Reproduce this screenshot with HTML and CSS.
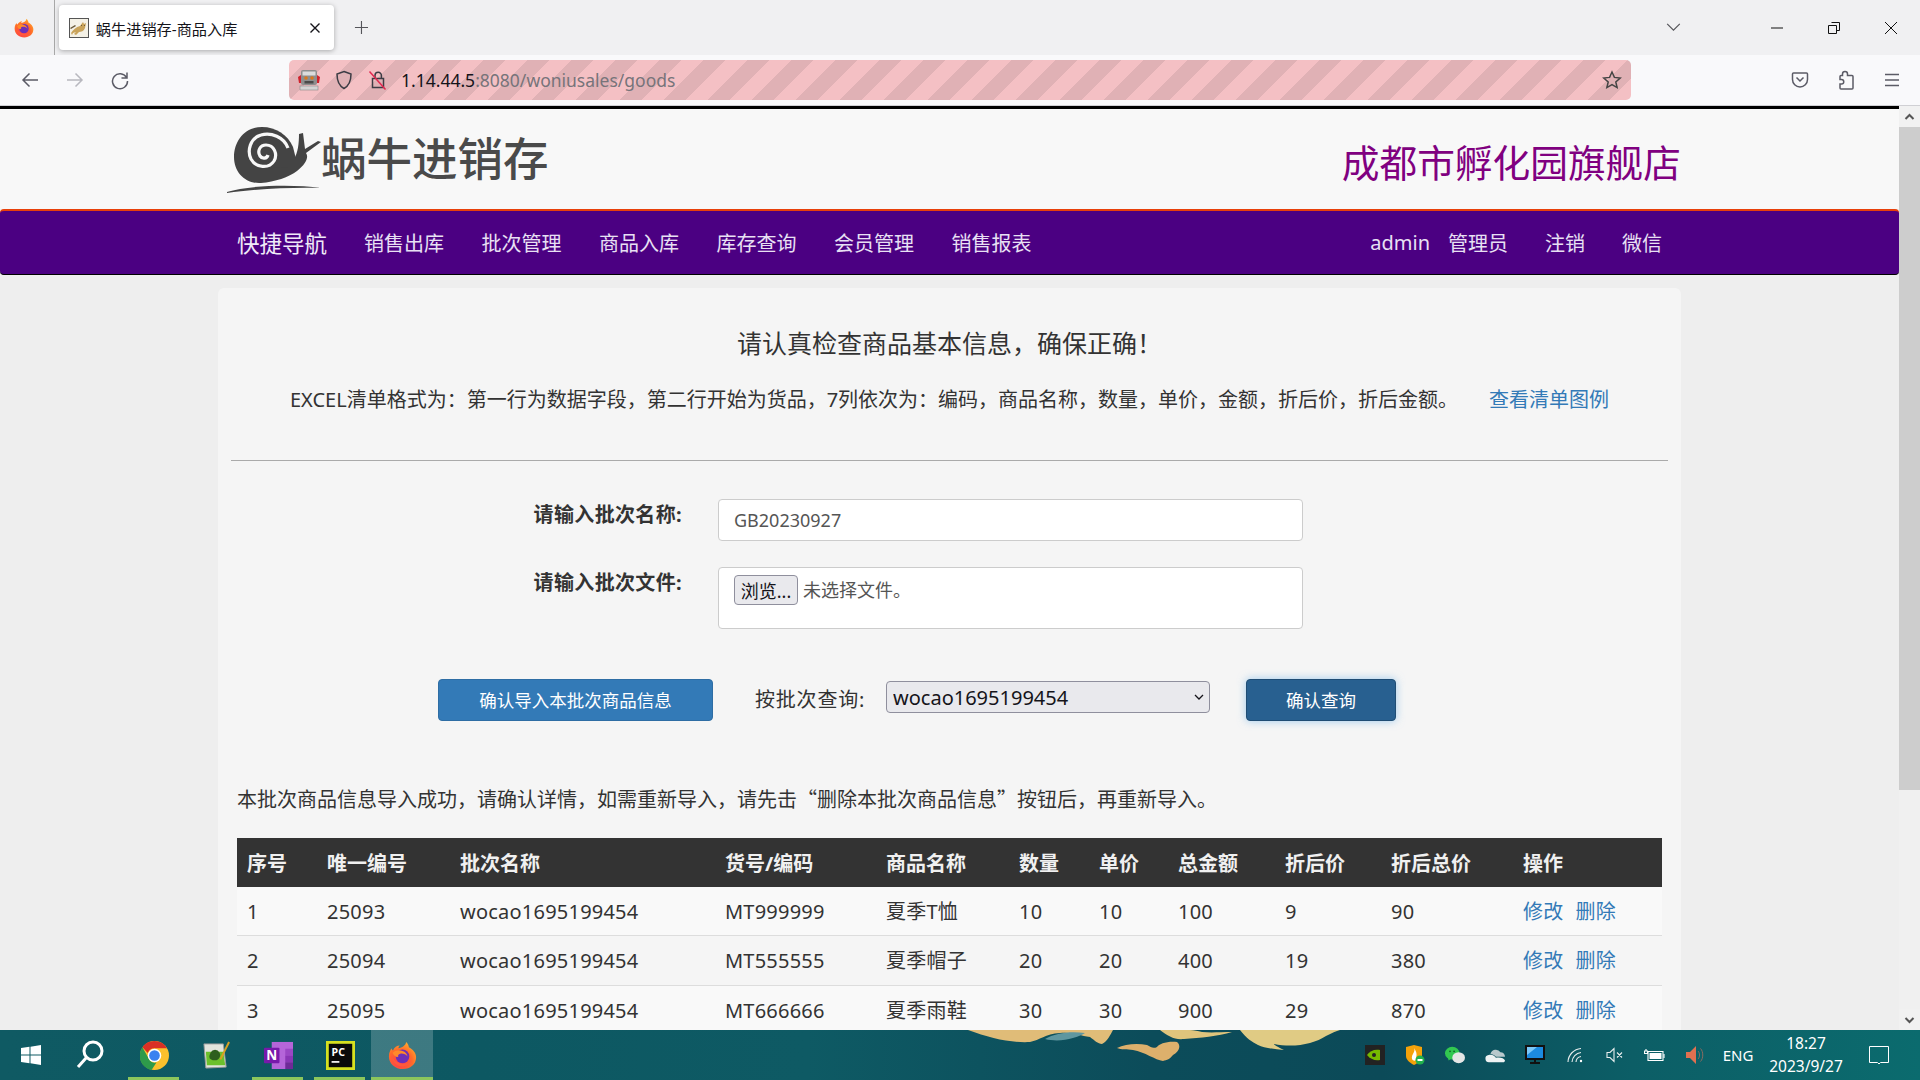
FILE: index.html
```html
<!DOCTYPE html>
<html lang="zh-CN">
<head>
<meta charset="utf-8">
<title>蜗牛进销存-商品入库</title>
<link rel="stylesheet" href="styles.css">
</head>
<body>
<svg class="defs" width="0" height="0" aria-hidden="true">
  <defs>
    <radialGradient id="foxg" cx="0.4" cy="0.75" r="0.85"><stop offset="0" stop-color="#ff3750"/><stop offset="0.55" stop-color="#ff6a2a"/><stop offset="1" stop-color="#ffbd2e"/></radialGradient>
    <symbol id="firefox" viewBox="0 0 32 32">
      <path fill="url(#foxg)" d="M20 1c2 2 3 4 3 6 4 2 8 6 8 11 0 8-6.500 13-14.500 13C8 31 1 25 1 17c0-4 1.500-7 3-9 0 1 .5 2 1.500 2.500C7 7 10 5 13 5c-1 1-1.500 2-1.500 3 4-1 8-3 8.500-7z"/>
      <circle cx="16" cy="17" r="7.500" fill="#6d2fb8"/>
      <path fill="#ff8a2a" d="M5 13c3-3 8-3.500 11-2 3 1 5 3 5.500 6-2-2.500-5-3.500-8-3-2 .5-3 2-2 3.500-3 .5-5-1-6.500-4.500z"/>
      <path fill="#ff5a3c" d="M4 17c1 7 6 11 12 11 5 0 9-3 10-7-2 3-6 4.500-10 4-5-.5-9-3.500-12-8z"/>
    </symbol>
  </defs>
</svg>
<div class="screen">
  <header class="tabbar">
    <div class="tab-home"><svg class="ic20" viewBox="0 0 32 32"><use href="#firefox"/></svg></div>
    <div class="tab">
      <svg class="favicon" viewBox="0 0 20 20"><rect x="0.500" y="0.500" width="19" height="19" fill="#f4f1e6" stroke="#555"/><path fill="#c9a35a" d="M2 15c2-3 5-6 9-7l3-4 1 2 2-1-1 5c-1 3-4 4-6 4l-3 3-2-1 2-2-3 1-1 2z"/><path fill="#6b5a3a" d="M1 10l5-3 1 1-5 3zM12 7h1v1h-1zM15 7h1v1h-1z"/></svg>
      <span class="tab-title">蜗牛进销存-商品入库</span>
      <svg class="tab-close" viewBox="0 0 12 12"><path d="M1.500 1.500l9 9M10.500 1.500l-9 9"/></svg>
    </div>
    <svg class="new-tab" viewBox="0 0 16 16"><path d="M8 1v14M1 8h14"/></svg>
    <svg class="tab-list" viewBox="0 0 16 10"><path d="M1 1l7 7 7-7"/></svg>
    <div class="win-btns">
      <svg class="win" viewBox="0 0 14 14"><path d="M1 7h12"/></svg>
      <svg class="win" viewBox="0 0 14 14"><path d="M4.500 1.500h8v8h-2.500M1.500 4.500h8v8h-8z"/></svg>
      <svg class="win" viewBox="0 0 14 14"><path d="M1 1l12 12M13 1L1 13"/></svg>
    </div>
  </header>

  <nav class="toolbar">
    <svg class="tool" viewBox="0 0 20 20"><path d="M18 10H3M9.500 3.500L3 10l6.500 6.500"/></svg>
    <svg class="tool off" viewBox="0 0 20 20"><path d="M2 10h15M10.500 3.500L17 10l-6.500 6.500"/></svg>
    <svg class="tool" viewBox="0 0 20 20"><path d="M16.500 7.500A7.500 7.500 0 1 0 17.500 11M17 2.500v5.500h-5.500"/></svg>
    <div class="urlbar">
      <svg class="url-robot" viewBox="0 0 22 22"><path fill="#d0222c" d="M0 8l3-2v8H1zM22 8l-3-2v8h2z"/><rect x="3" y="1" width="16" height="15" rx="2" fill="#8e8e8e"/><rect x="4.500" y="2.500" width="13" height="4" fill="#dcdcdc"/><circle cx="8" cy="9" r="1.800" fill="#d9781e"/><circle cx="14" cy="9" r="1.800" fill="#d9781e"/><rect x="6.500" y="12" width="9" height="2.500" fill="#4a4a4a"/><rect x="2" y="17" width="18" height="4" fill="#d4d4d4" stroke="#888" stroke-width=".6"/></svg>
      <svg class="url-ic" viewBox="0 0 20 20"><path d="M10 1.500l7 2.500c0 7-1.500 11.500-7 14.500C4.500 15.500 3 11 3 4z"/></svg>
      <svg class="url-ic" viewBox="0 0 20 20"><path d="M7 8V5.500a3.200 3.200 0 0 1 6.400 0V8M4.500 8.500h11v9h-11z"/><path class="slash" d="M1.500 1.500l16 18"/></svg>
      <span class="url-text"><b>1.14.44.5</b>:8080/woniusales/goods</span>
      <svg class="url-star" viewBox="0 0 20 20"><path d="M10 2l2.400 5.400 5.800.6-4.400 3.900 1.300 5.700L10 14.700l-5.100 2.900 1.300-5.700L1.800 8l5.800-.6z"/></svg>
    </div>
    <div class="tool-right">
      <svg class="tool" viewBox="0 0 20 20"><path d="M3.500 3h13a1 1 0 0 1 1 1v5.500a7.500 7.500 0 0 1-15 0V4a1 1 0 0 1 1-1zM6.500 7.500L10 11l3.500-3.500"/></svg>
      <svg class="tool" viewBox="0 0 20 20"><path d="M9 1.500c1.500 0 2.500 1 2.500 2.500v1.500H16a1 1 0 0 1 1 1V18a1 1 0 0 1-1 1H5a1 1 0 0 1-1-1v-4h1.500a2 2 0 0 0 0-4.500H4V6.500a1 1 0 0 1 1-1h1.500V4C6.500 2.500 7.500 1.500 9 1.500z"/></svg>
      <svg class="tool" viewBox="0 0 20 20"><path d="M3 4.500h14M3 10h14M3 15.500h14"/></svg>
    </div>
  </nav>

  <div class="viewport">
    <div class="page">
      <div class="site-head">
        <div class="logo">
          <svg class="snail" viewBox="0 0 105 80">
            <path class="snail-body" d="M43 12C26 12 15 26 15 42c0 16 12 27 27 26 14-1 28-6 36-12 9-7 12-14 9-18l15-11-3-1-13 8-2-16-4 1c0 9-1 19-5 25"/>
            <path class="snail-body" d="M43 12c14 0 26 8 31 20l3 12-8 8-30 2z"/>
            <path class="snail-spiral" d="M69 33C65 22 52 17 42 20 31 23 28 36 32 44c5 9 18 10 23 2 4-7 0-16-8-16-6 0-9 6-6 11 2 3 7 3 8-1"/>
            <path class="snail-body" d="M8 77C30 70 75 69 102 73 75 72 35 74 8 78z"/>
          </svg>
          <span class="logo-text">蜗牛进销存</span>
        </div>
        <div class="shop-name">成都市孵化园旗舰店</div>
      </div>
      <div class="main-nav">
        <a class="nav-brand">快捷导航</a>
        <a class="nav-item">销售出库</a>
        <a class="nav-item">批次管理</a>
        <a class="nav-item">商品入库</a>
        <a class="nav-item">库存查询</a>
        <a class="nav-item">会员管理</a>
        <a class="nav-item">销售报表</a>
        <div class="nav-user">
          <span class="nav-name">admin</span><span class="nav-role">管理员</span>
          <a class="nav-link">注销</a>
          <a class="nav-link">微信</a>
        </div>
      </div>

      <main class="card">
        <h1 class="notice">请认真检查商品基本信息，确保正确！</h1>
        <div class="format-row">
          <span>EXCEL清单格式为：第一行为数据字段，第二行开始为货品，7列依次为：编码，商品名称，数量，单价，金额，折后价，折后金额。</span>
          <a class="link">查看清单图例</a>
        </div>
        <hr class="rule">
        <div class="form-row">
          <label class="form-label">请输入批次名称:</label>
          <input class="form-input" type="text" value="GB20230927">
        </div>
        <div class="form-row file-row">
          <label class="form-label">请输入批次文件:</label>
          <div class="form-file"><button class="file-btn" type="button">浏览...</button><span class="file-none">未选择文件。</span></div>
        </div>
        <div class="actions">
          <button class="btn btn-import" type="button">确认导入本批次商品信息</button>
          <span class="query-label">按批次查询:</span>
          <div class="select-wrap">
            <select class="batch-select"><option>wocao1695199454</option></select>
            <svg class="select-arrow" viewBox="0 0 10 6"><path d="M1 1l4 4 4-4"/></svg>
          </div>
          <button class="btn btn-query" type="button">确认查询</button>
        </div>
        <p class="message">本批次商品信息导入成功，请确认详情，如需重新导入，请先击“删除本批次商品信息”按钮后，再重新导入。</p>
        <table class="goods">
          <colgroup><col class="c1"><col class="c2"><col class="c3"><col class="c4"><col class="c5"><col class="c6"><col class="c7"><col class="c8"><col class="c9"><col class="c10"><col class="c11"></colgroup>
          <thead><tr><th>序号</th><th>唯一编号</th><th>批次名称</th><th>货号/编码</th><th>商品名称</th><th>数量</th><th>单价</th><th>总金额</th><th>折后价</th><th>折后总价</th><th>操作</th></tr></thead>
          <tbody>
            <tr><td>1</td><td>25093</td><td>wocao1695199454</td><td>MT999999</td><td>夏季T恤</td><td>10</td><td>10</td><td>100</td><td>9</td><td>90</td><td><a class="link">修改</a><a class="link op">删除</a></td></tr>
            <tr><td>2</td><td>25094</td><td>wocao1695199454</td><td>MT555555</td><td>夏季帽子</td><td>20</td><td>20</td><td>400</td><td>19</td><td>380</td><td><a class="link">修改</a><a class="link op">删除</a></td></tr>
            <tr><td>3</td><td>25095</td><td>wocao1695199454</td><td>MT666666</td><td>夏季雨鞋</td><td>30</td><td>30</td><td>900</td><td>29</td><td>870</td><td><a class="link">修改</a><a class="link op">删除</a></td></tr>
          </tbody>
        </table>
      </main>
    </div>
    <aside class="scrollbar">
      <div class="sb-btn"><svg class="sb-arrow" viewBox="0 0 10 8"><path d="M1 6l4-4 4 4"/></svg></div>
      <div class="sb-track"><div class="sb-thumb"></div></div>
      <div class="sb-btn"><svg class="sb-arrow" viewBox="0 0 10 8"><path d="M1 2l4 4 4-4"/></svg></div>
    </aside>
  </div>

  <footer class="taskbar">
    <svg class="wallpaper" viewBox="0 0 1920 50" preserveAspectRatio="none">
      <path fill="#e0bc78" d="M968 0c22 8 42 13 62 12 10-2 15-8 30-9 15-1 20 3 30 4 4 3 8 7 12 7 6-3 8-9 11-14z"/>
      <path fill="#5f97a0" d="M1045 9c10-6 25-8 40-6-8 5-25 10-40 6z"/>
      <path fill="#dfc47c" d="M1160 0c8 6 14 10 24 9 16-1 34-3 48-7-12 0-20 1-30 0-4-1-8-2-12-2z"/>
      <path fill="#ddb06c" d="M1117 18c8-4 20-5 30-3 4 2 6 4 10 2 2-3 10-6 20-5 4 3 3 9-4 13-3 4-6 5-10 6-8-1-18-9-30-11-6-1-12 0-16-2z"/>
      <path fill="#e0cb84" d="M1240 0c6 8 12 12 18 15 6 3 16 4 26 5-6-3-10-5-10-6 20 4 40 0 52-8 6-3 10-5 14-6z"/>
    </svg>
    <div class="task-slot first"><svg class="ic-win" viewBox="0 0 20 20"><path d="M0 3l8.500-1.200v7.700H0zM9.500 1.700L20 0v9.500H9.500zM0 10.500h8.500v7.700L0 17zM9.500 10.500H20V20L9.500 18.300z"/></svg></div>
    <div class="task-slot"><svg class="ic-search" viewBox="0 0 28 30"><circle cx="17" cy="11" r="9"/><path d="M10.500 17.500L2 27"/></svg></div>
    <div class="task-slot used">
      <svg class="ic-app" viewBox="0 0 30 30"><circle cx="15" cy="15" r="15" fill="#fbc02d"/><path fill="#d93025" d="M15 0a15 15 0 0 1 13 7.500H15a7.500 7.500 0 0 0-7 5L2.500 6.500A15 15 0 0 1 15 0z"/><path fill="#2e9a4a" d="M2.500 6.500L9 18a7.500 7.500 0 0 0 8 4.300L12 30A15 15 0 0 1 2.500 6.500z"/><circle cx="15" cy="15" r="7" fill="#fff"/><circle cx="15" cy="15" r="5.500" fill="#3b82f0"/></svg>
    </div>
    <div class="task-slot">
      <svg class="ic-app" viewBox="0 0 30 30"><path fill="#e2e4dc" stroke="#9a9a9a" d="M2 3h20l3 24-21 1z"/><path fill="#6cc02c" d="M4 11h18l2 14H5z"/><path fill="#2d5e1e" d="M9 12a5 5 0 0 1 9 0c2 3 0 7-3 8-3 0-5 0-7-2-1-2 0-4 1-6z"/><path stroke="#d9a020" stroke-width="2" fill="none" d="M28 1L19 19"/></svg>
    </div>
    <div class="task-slot used">
      <svg class="ic-app" viewBox="0 0 30 30"><rect x="8" y="1" width="22" height="28" fill="#b565d9"/><rect x="22" y="8" width="8" height="7" fill="#9b47c4"/><rect x="22" y="15" width="8" height="7" fill="#8a36b5"/><rect x="22" y="22" width="8" height="7" fill="#6f2a98"/><rect x="0" y="7" width="16" height="16" rx="1" fill="#7719aa"/><text class="onenote-n" x="8" y="20">N</text></svg>
    </div>
    <div class="task-slot used">
      <svg class="ic-app" viewBox="0 0 26 26"><rect width="26" height="26" fill="#d6e020"/><rect x="2.500" y="2.500" width="21" height="21" fill="#0a0a0a"/><text class="pc-text" x="5" y="13">PC</text><rect x="5" y="18" width="7" height="1.500" fill="#fff"/></svg>
    </div>
    <div class="task-slot active"><svg class="ic-app" viewBox="0 0 32 32"><use href="#firefox"/></svg></div>

    <div class="tray">
      <div class="tray-slot"><svg class="ic-tray" viewBox="0 0 20 20"><rect width="20" height="20" fill="#222"/><path fill="#76b900" d="M2 10c3-4 7-6 13-5v10c-5 1-10-1-13-5z"/><circle cx="9" cy="10" r="2" fill="#222"/></svg></div>
      <div class="tray-slot"><svg class="ic-tray" viewBox="0 0 20 20"><path fill="#f5a20a" d="M1 2l8-2 8 2v9c0 4-4 7-8 9-4-2-8-5-8-9z"/><path fill="#fff" d="M9 3c2 4-3 6-2 11 1 2 3 2 4 1-1-2 3-5-2-12z"/><circle cx="15" cy="15" r="4.500" fill="#22b14c"/><rect x="12.500" y="14" width="5" height="2" fill="#fff"/></svg></div>
      <div class="tray-slot"><svg class="ic-tray" viewBox="0 0 22 20"><ellipse cx="8" cy="8" rx="8" ry="7" fill="#32c850"/><path fill="#32c850" d="M3 12l1 4 4-3z"/><ellipse cx="15" cy="13" rx="7" ry="6" fill="#e6e6e6"/><circle cx="5.500" cy="6" r="1" fill="#16602a"/><circle cx="10" cy="6" r="1" fill="#16602a"/></svg></div>
      <div class="tray-slot"><svg class="ic-tray" viewBox="0 0 22 16"><path fill="#b8c8cc" d="M6 7a6 6 0 0 1 11-2c3 0 5 2 5 5H12c-2-2-4-3-6-3z"/><path fill="#eef2f3" d="M5 16a4 4 0 0 1-1-8c3-1 6 0 8 3 4-1 9 0 10 3 0 1-1 2-2 2z"/></svg></div>
      <div class="tray-slot"><svg class="ic-tray" viewBox="0 0 20 20"><rect width="20" height="15" fill="#111"/><rect x="2" y="2" width="16" height="11" fill="#1c8ae0"/><path fill="#7cc8f8" d="M2 2h10L2 10z"/><rect x="9" y="15" width="2" height="3" fill="#111"/><rect x="5" y="17" width="10" height="2" fill="#111"/></svg></div>
      <div class="tray-slot"><svg class="ic-line" viewBox="0 0 16 16"><path d="M1 15A14 14 0 0 1 14 1.500M5 15A10 10 0 0 1 14 5.500M9 15a6 6 0 0 1 5-5.500"/><circle class="dot" cx="14" cy="14" r="1.200"/></svg></div>
      <div class="tray-slot"><svg class="ic-line" viewBox="0 0 18 16"><path d="M1 5.500h3L8 1.500v13l-4-4H1zM11 5.500l5 5M16 5.500l-5 5"/></svg></div>
      <div class="tray-slot"><svg class="ic-batt" viewBox="0 0 22 14"><path d="M4 3.500h15v9H4z"/><rect class="fill" x="5.500" y="5" width="12" height="6"/><path d="M20 6v4M2 1v2M0.500 3h3v2.500h-3z"/></svg></div>
      <div class="tray-slot"><svg class="ic-tray" viewBox="0 0 20 20"><path fill="#e07050" d="M1 7h4l6-6v18l-6-6H1z"/><path fill="none" stroke="#8a6b60" d="M13 6c2 2 2 6 0 8M15.500 3.500c3 3 3 10 0 13"/></svg></div>
      <span class="tray-lang">ENG</span>
      <div class="clock"><span>18:27</span><span>2023/9/27</span></div>
      <div class="tray-note"><svg class="ic-note" viewBox="0 0 20 19"><path d="M.5.5h19v16h-8l-1.500 1.500-1.500-1.500h-8z"/></svg></div>
    </div>
  </footer>
</div>
</body>
</html>
```

FILE: styles.css
```css
* { box-sizing: border-box; }
html, body { margin: 0; height: 100%; overflow: hidden; }
body { font-family: "Noto Sans", "Noto Sans CJK SC", sans-serif; color: #333; }
.defs { position: absolute; }
.screen { width: 1920px; height: 1080px; display: flex; flex-direction: column; overflow: hidden; }

/* browser chrome */
.tabbar { height: 55px; flex: none; background: #f0f0f2; display: flex; align-items: center; }
.tab-home { width: 55px; height: 55px; display: flex; align-items: center; justify-content: center; border-right: 1px solid #a8a8a8; padding-right: 5px; }
.ic20 { width: 20px; height: 20px; }
.tab { width: 276px; height: 45px; margin: 0 0 0 4px; background: #fff; border-radius: 4px; box-shadow: 0 1px 5px rgba(0,0,0,.3); display: flex; align-items: center; padding-left: 10px; }
.favicon { width: 20px; height: 20px; flex: none; }
.tab-title { margin-left: 7px; font-size: 15.200px; color: #15141a; flex: 1; white-space: nowrap; }
.tab-close { width: 12px; height: 12px; margin-right: 13px; fill: none; stroke: #15141a; stroke-width: 1.400; }
.new-tab { width: 15px; height: 15px; margin-left: 20px; fill: none; stroke: #55555a; stroke-width: 1.200; }
.tab-list { width: 15px; height: 9px; margin-left: 1297px; fill: none; stroke: #55555a; stroke-width: 1.300; }
.win-btns { margin-left: auto; width: 240px; display: flex; justify-content: flex-end; gap: 43px; padding-right: 22px; }
.win { width: 14px; height: 14px; fill: none; stroke: #111; stroke-width: 1; }

.toolbar { height: 51px; flex: none; background: #f9f9fb; border-bottom: 1px solid #d0d0d4; display: flex; align-items: center; padding-left: 20px; }
.tool { width: 20px; height: 20px; fill: none; stroke: #5b5b66; stroke-width: 1.500; flex: none; margin-right: 25px; }
.tool.off { stroke: #b8b8bf; }
.urlbar { width: 1342px; height: 40px; margin-left: 134px; border-radius: 5px; background: repeating-linear-gradient(-45deg, #f4c0c4 0, #f4c0c4 15.550px, #e0b1b5 15.550px, #e0b1b5 31.100px); display: flex; align-items: center; padding-left: 9px; }
.url-robot { width: 22px; height: 22px; flex: none; }
.url-ic { width: 20px; height: 20px; flex: none; margin-left: 14px; fill: none; stroke: #3c3c44; stroke-width: 1.500; }
.slash { stroke: #e22850; }
.url-text { margin-left: 13px; font-size: 17.500px; color: #77747a; white-space: nowrap; flex: 1; }
.url-text b { font-weight: 400; color: #15141a; }
.url-star { width: 20px; height: 20px; flex: none; margin-right: 9px; fill: none; stroke: #444; stroke-width: 1.500; }
.tool-right { margin-left: 159px; display: flex; gap: 0; }
.tool-right .tool { margin-right: 26px; }
.tool-right .tool:last-child { margin-right: 0; }

/* page */
.viewport { flex: 1; min-height: 0; display: flex; }
.page { flex: 1; min-width: 0; background: #eee; border-top: 3px solid #000; overflow: hidden; }
.site-head { height: 100px; background: #f8f8f8; display: flex; align-items: center; justify-content: space-between; padding: 0 218px 0 2px; }
.logo { display: flex; align-items: center; margin-left: 218px; margin-top: -8px; }
.snail { width: 105px; height: 80px; margin-left: -1px; flex: none; }
.snail-body { fill: #444; }
.snail-spiral { fill: none; stroke: #f8f8f8; stroke-width: 3.200; }
.logo-text { font-size: 45.500px; font-weight: 500; color: #4a4a4a; margin-left: -3px; margin-top: 8px; line-height: 1; white-space: nowrap; }
.shop-name { font-size: 37.700px; color: #800080; margin-top: 3px; white-space: nowrap; }
.main-nav { height: 66px; background: #4b0082; border-top: 2px solid #e8400a; border-bottom: 1px solid #000; border-radius: 4px; display: flex; align-items: center; padding: 0 237px 0 237px; color: #e8e0f4; font-size: 20px; }
.nav-brand { font-size: 22.500px; margin-right: 37px; color: #f0eaf8; }
.nav-item { margin-right: 37.500px; white-space: nowrap; }
.nav-user { margin-left: auto; display: flex; align-items: center; }
.nav-name { margin-right: 18px; }
.nav-link { margin-left: 37px; }
.card { margin: 13px 218px 0; height: 800px; background: #f5f5f5; border-radius: 6px; padding-top: 38px; }
.notice { margin: 0; font-size: 25px; font-weight: 400; line-height: 34px; text-align: center; }
.format-row { margin-top: 26px; padding-left: 72px; display: grid; grid-template-columns: 1199px auto; font-size: 20px; line-height: 28px; white-space: nowrap; }
.link { color: #337ab7; }
.rule { margin: 46px 13px 0; border: 0; border-top: 1px solid #aaa; height: 1px; }
.form-row { margin-top: 38px; display: flex; }
.file-row { margin-top: 26px; }
.form-label { width: 500px; flex: none; padding: 2px 36px 0 0; text-align: right; font-size: 20px; font-weight: 700; line-height: 28px; letter-spacing: .35px; }
.form-input { width: 585px; height: 42px; border: 1px solid #ccc; border-radius: 4px; background: #fff; padding: 0 15px; font: inherit; font-size: 18px; color: #555; }
.form-file { width: 585px; height: 62px; border: 1px solid #ccc; border-radius: 4px; background: #fff; padding: 7px 15px; display: flex; align-items: flex-start; font-size: 18px; color: #555; }
.file-btn { width: 64px; height: 30px; padding: 0; border: 1px solid #8f8f9d; border-radius: 4px; background: #e9e9ed; font: inherit; font-size: 18px; color: #15141a; }
.file-none { margin-left: 5px; line-height: 30px; }
.actions { margin-top: 50px; padding-left: 220px; display: flex; align-items: center; }
.btn { height: 42px; border-radius: 4px; font: inherit; font-size: 17.500px; color: #fff; padding: 0 0 2px; }
.btn-import { width: 275px; background: #337ab7; border: 1px solid #2e6da4; }
.btn-query { width: 150px; margin-left: 36px; background: #286090; border: 1px solid #204d74; box-shadow: 0 0 8px rgba(102,175,233,.6); }
.query-label { margin-left: 42px; margin-top: -4px; width: 131px; font-size: 20px; letter-spacing: .8px; white-space: nowrap; }
.select-wrap { position: relative; width: 324px; height: 32px; margin-top: -6px; }
.batch-select { appearance: none; width: 100%; height: 100%; border: 1px solid #8f8f9d; border-radius: 4px; background: #e9e9ed; font: inherit; font-size: 20px; color: #15141a; padding: 0 6px; }
.select-arrow { position: absolute; right: 6px; top: 13px; width: 10px; height: 6px; fill: none; stroke: #15141a; stroke-width: 1.300; }
.message { margin: 64px 0 0 19px; font-family: "Noto Sans CJK SC", sans-serif; font-size: 20px; line-height: 28px; white-space: nowrap; }
.goods { margin: 25px 0 0 19px; width: 1425px; table-layout: fixed; border-collapse: collapse; font-size: 20px; line-height: 28.570px; }
.c1 { width: 80px; } .c2 { width: 133px; } .c3 { width: 265px; } .c4 { width: 161px; } .c5 { width: 133px; } .c6 { width: 80px; } .c7 { width: 79px; } .c8 { width: 107px; } .c9 { width: 106px; } .c10 { width: 132px; } .c11 { width: 149px; }
.goods th { background: #333; color: #f0f0f0; text-align: left; padding: 12px 10px 8px; font-weight: 700; white-space: nowrap; }
.goods td { padding: 11px 10px 9px; border-top: 1px solid #ddd; white-space: nowrap; letter-spacing: .22px; }
.goods tbody tr:first-child td { border-top: 0; }
.goods tbody tr:nth-child(odd) { background: #f9f9f9; }
.op { margin-left: 12px; }

/* scrollbar */
.scrollbar { width: 21px; flex: none; background: #f0f0f0; display: flex; flex-direction: column; }
.sb-btn { height: 21px; flex: none; display: flex; align-items: center; justify-content: center; background: #f1f1f1; }
.sb-arrow { width: 11px; height: 8px; fill: none; stroke: #555; stroke-width: 2; }
.sb-track { flex: 1; }
.sb-thumb { height: 663px; background: #cdcdcd; }

/* taskbar */
.taskbar { position: relative; height: 50px; flex: none; display: flex; align-items: stretch; background: linear-gradient(90deg, #0f5a63 0%, #0d5862 25%, #0e5a64 42%, #0c4c5a 60%, #0c4a58 72%, #0c5e66 85%, #0b6b6e 100%); overflow: hidden; }
.wallpaper { position: absolute; inset: 0; width: 1920px; height: 50px; }
.task-slot { position: relative; width: 62px; display: flex; align-items: center; justify-content: center; }
.task-slot.first { width: 61px; }
.task-slot.used::after, .task-slot.active::after { content: ""; position: absolute; left: 5px; right: 6px; bottom: 0; height: 3px; background: #8cc65c; }
.task-slot.active { background: rgba(255,255,255,.2); }
.task-slot.active::after { left: 0; right: 0; }
.ic-win { width: 20px; height: 20px; fill: #fff; }
.ic-search { width: 28px; height: 30px; margin-left: -4px; fill: none; stroke: #fff; stroke-width: 3; }
.ic-app { width: 29px; height: 29px; }
.onenote-n { fill: #fff; font-size: 14px; font-weight: 700; text-anchor: middle; font-family: "Noto Sans", sans-serif; }
.pc-text { fill: #fff; font-size: 9.500px; font-weight: 700; font-family: "Noto Sans", sans-serif; }
.tray { position: relative; margin-left: auto; display: flex; align-items: center; padding-right: 31px; color: #fff; }
.tray-slot { width: 40px; display: flex; justify-content: center; }
.ic-tray { width: 20px; height: 20px; }
.ic-line { width: 18px; height: 16px; fill: none; stroke: #e8eeee; stroke-width: 1.100; }
.dot { fill: #fff; stroke: none; }
.ic-batt { width: 22px; height: 14px; fill: none; stroke: #fff; stroke-width: 1.100; }
.fill { fill: #fff; stroke: none; }
.tray-lang { width: 40px; font-size: 15px; text-align: center; margin-left: 3px; white-space: nowrap; }
.clock { width: 96px; margin-left: 0; display: flex; flex-direction: column; align-items: center; font-size: 15.500px; line-height: 23px; }
.tray-note { margin-left: 15px; display: flex; }
.ic-note { width: 20px; height: 19px; fill: none; stroke: #fff; stroke-width: 1; }
```
